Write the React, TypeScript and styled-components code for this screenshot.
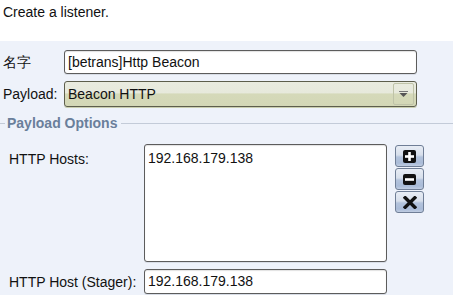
import React from "react";
import styled, { createGlobalStyle } from "styled-components";

const Global = createGlobalStyle`
  html, body { margin: 0; padding: 0; background: #eef2fa; }
  body { font-family: "Liberation Sans", Arial, sans-serif; font-size: 14px; color: #111; }
  * { box-sizing: border-box; }
`;

const Page = styled.div`
  width: 453px;
  height: 295px;
  overflow: hidden;
  background: #eef2fa;
`;

const Header = styled.div`
  height: 41px;
  background: #ffffff;
  padding: 4px 0 0 3px;
  line-height: 16px;
`;

const Form = styled.div`
  display: flex;
  flex-direction: column;
  padding-top: 9px;
`;

const Row = styled.div<{ $indent: number; $labelW: number; $mt?: number }>`
  display: flex;
  align-items: center;
  padding-left: ${(p) => p.$indent}px;
  margin-top: ${(p) => p.$mt ?? 0}px;
  & > label {
    width: ${(p) => p.$labelW}px;
    flex: none;
    line-height: 16px;
  }
`;

const TopRow = styled(Row)`
  align-items: flex-start;
  & > label { padding-top: 7px; }
`;

const Field = styled.div<{ $w: number; $h: number }>`
  width: ${(p) => p.$w}px;
  height: ${(p) => p.$h}px;
  background: #fff;
  border: 1px solid #5c5c5c;
  border-radius: 3px;
  box-shadow: inset 0 1px 1px rgba(0,0,0,0.12), 0 1px 0 #d8dde6;
  padding: 3px 0 0 3px;
  line-height: 16px;
  flex: none;
`;

const Area = styled(Field)`
  padding: 5px 0 0 3px;
`;

const Combo = styled.div`
  width: 353px;
  height: 26px;
  border: 1px solid #5d5e4c;
  border-radius: 3px;
  background: linear-gradient(#e9ebdf 0%, #e7e9dc 45%, #d5d9b9 50%, #d3d7b6 100%);
  display: flex;
  align-items: center;
  padding-left: 3px;
  line-height: 16px;
  box-shadow: 0 1px 0 #c9ceb0;
`;

const ComboText = styled.span`
  flex: 1;
`;

const ArrowBox = styled.div`
  width: 21px;
  height: 22px;
  margin-right: 2px;
  border: 1px solid #bfc3a8;
  border-radius: 2px;
  display: flex;
  align-items: center;
  justify-content: center;
`;

const Section = styled.div`
  display: flex;
  align-items: center;
  margin-top: 8px;
  height: 16px;
  &::before {
    content: "";
    width: 5px;
    height: 1px;
    background: #c3cbd8;
    margin-right: 2px;
  }
  &::after {
    content: "";
    flex: 1;
    height: 1px;
    background: #c3cbd8;
    margin-left: 4px;
  }
`;

const SectionTitle = styled.span`
  font-weight: bold;
  color: #6a7f9b;
  line-height: 16px;
`;

const Buttons = styled.div`
  display: flex;
  flex-direction: column;
  margin-left: 8px;
  margin-top: 1px;
  gap: 1px;
`;

const IconButton = styled.div`
  width: 29px;
  height: 22px;
  border: 1px solid #6f7e96;
  border-radius: 3px;
  background: linear-gradient(#e8edf5 0%, #d7dfeb 45%, #b3c3dc 55%, #a9bbd7 85%, #c0cde2 100%);
  display: flex;
  align-items: center;
  justify-content: center;
`;

const PlusIcon = () => (
  <svg width="13" height="13" viewBox="0 0 13 13">
    <rect x="0" y="0" width="13" height="13" rx="2" fill="#111" />
    <rect x="5.2" y="2" width="2.6" height="9" fill="#fff" />
    <rect x="2" y="5.2" width="9" height="2.6" fill="#fff" />
  </svg>
);

const MinusIcon = () => (
  <svg width="13" height="11" viewBox="0 0 13 11">
    <rect x="0" y="0" width="13" height="11" rx="2" fill="#111" />
    <rect x="2" y="4.2" width="9" height="2.6" fill="#fff" />
  </svg>
);

const XIcon = () => (
  <svg width="14" height="13" viewBox="0 0 14 13">
    <path d="M2.2 1.8 L11.8 11.2 M11.8 1.8 L2.2 11.2" stroke="#111" strokeWidth="3.4" strokeLinecap="square" />
  </svg>
);

const Arrow = () => (
  <svg width="9" height="6" viewBox="0 0 9 6">
    <rect x="0" y="0" width="9" height="1" fill="#777" />
    <path d="M0.5 2 L8.5 2 L4.5 6 Z" fill="#555" />
  </svg>
);

export default function App() {
  return (
    <Page>
      <Global />
      <Header>Create a listener.</Header>
      <Form>
        <Row $indent={3} $labelW={61}>
          <label>名字</label>
          <Field $w={353} $h={24}>[betrans]Http Beacon</Field>
        </Row>
        <Row $indent={3} $labelW={61} $mt={7}>
          <label>Payload:</label>
          <Combo>
            <ComboText>Beacon HTTP</ComboText>
            <ArrowBox>
              <Arrow />
            </ArrowBox>
          </Combo>
        </Row>
        <Section>
          <SectionTitle>Payload Options</SectionTitle>
        </Section>
        <TopRow $indent={9} $labelW={135} $mt={13}>
          <label>HTTP Hosts:</label>
          <Area $w={243} $h={118}>192.168.179.138</Area>
          <Buttons>
            <IconButton><PlusIcon /></IconButton>
            <IconButton><MinusIcon /></IconButton>
            <IconButton><XIcon /></IconButton>
          </Buttons>
        </TopRow>
        <Row $indent={9} $labelW={135} $mt={7}>
          <label>HTTP Host (Stager):</label>
          <Field $w={243} $h={25}>192.168.179.138</Field>
        </Row>
      </Form>
    </Page>
  );
}
